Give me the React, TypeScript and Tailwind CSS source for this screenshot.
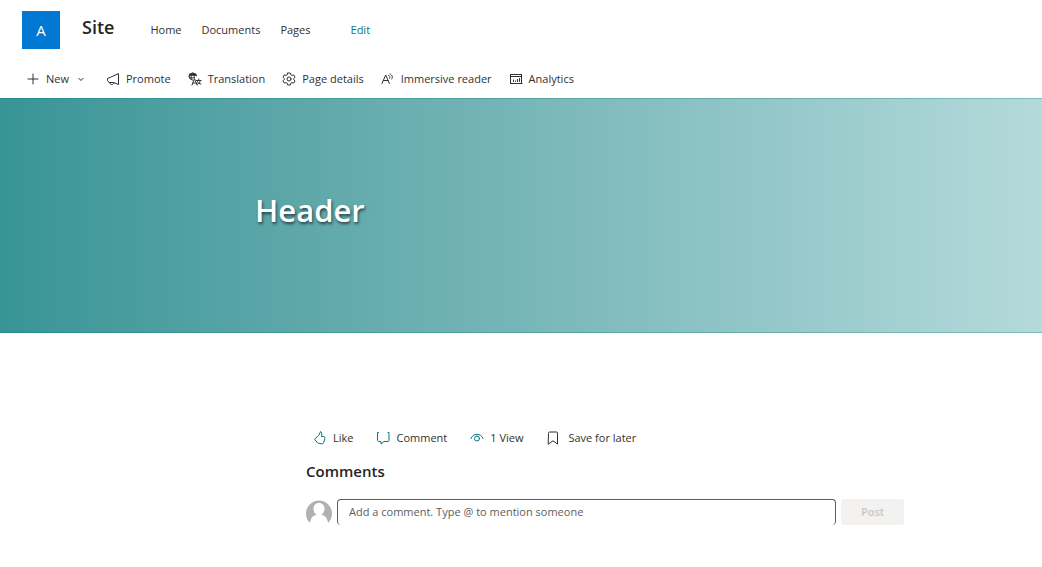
import type { ReactNode } from 'react';

const navLinks = ['Home', 'Documents', 'Pages'];

function Icon({ children, className = '' }: { children: ReactNode; className?: string }) {
  return (
    <svg
      viewBox="0 0 14 14"
      fill="none"
      stroke="currentColor"
      strokeLinecap="round"
      strokeLinejoin="round"
      aria-hidden="true"
      className={`size-3.5 shrink-0 ${className}`}
    >
      {children}
    </svg>
  );
}

const PlusIcon = () => (
  <Icon><path d="M7 2v10M2 7h10" /></Icon>
);

const MegaphoneIcon = () => (
  <Icon>
    <path d="M12.500 2v10.500L7.500 10.500H3L1.500 8.500v-2L4 5.500zM3.500 10.500c.5 2.800 4 2.800 4.500.2" />
  </Icon>
);

const TranslationIcon = () => (
  <Icon>
    <path d="M1 4.500a3.800 3.800 0 0 1 7.500-.5M1 4.500a3.800 3.800 0 0 0 3 3.500M1.200 3.200h7M1.500 5.800h4M4.500 1C2.500 3 3 6 4.300 8M4.800 1c1.500 1.300 1.800 3 1.500 5M4 13l2.500-6.500L9 13M4.800 11h3.400M8.500 8.500h4.500M10.700 7v1.500M12.300 8.500c-.3 2-1.500 3-3 3.800M9.500 9.500c.5 1.500 2 2.500 3.500 2.500" />
    <path d="M2 2.500h5.500" strokeWidth="2" />
  </Icon>
);

const GearIcon = () => (
  <Icon>
    <path d="M5.700 1h2.600l.4 1.700 1.300.7 1.700-.5L13 5.200l-1.200 1.200v1.300L13 8.800l-1.300 2.300-1.700-.5-1.300.7-.4 1.700H5.700l-.4-1.700-1.300-.7-1.700.5L1 8.800l1.200-1.200V6.400L1 5.200l1.300-2.300 1.700.5 1.300-.7z" />
    <circle cx="7" cy="7" r="2" />
  </Icon>
);

const ReaderIcon = () => (
  <Icon>
    <path d="M1 11.500 4.700 3l3.700 8.500M2.300 8.500h4.800M7.500 3.500c1.200.3 1.700 1.500 1.200 2.700M9 2c2.200.8 3 3 1.800 5" />
  </Icon>
);

const AnalyticsIcon = () => (
  <Icon>
    <path d="M1.500 2.500v9M1.500 2.500h11M1.500 4.500h11M1.500 11.500h11.500M12.500 2.500v9M4.500 8v1.500M6.500 9v.5M8.500 7.500v2M10.500 6.500v3" />
  </Icon>
);

const LikeIcon = () => (
  <Icon className="text-[#03787c]">
    <path d="M8 1c1 1 1 2.500.5 4.500h2.200c1 0 1.500.8 1.200 1.800l-1.200 4.200c-.3 1.100-1 1.500-2 1.300l-3.200-.6c-.8-.2-1.200-.5-1.700-1.200L2 8.800C1.500 8 2 7.200 2.900 6.900 5.200 5.800 6.500 3.500 7 1.500c.2-.6.6-.8 1-.5z" />
  </Icon>
);

const CommentIcon = () => (
  <Icon className="text-[#03787c]">
    <path d="M2.500 1.500h-1v7.500c0 1 .5 1.500 1.500 1.500h2v2.500l3-2.500h4c.7 0 1-.5 1-1v-8h-1" />
  </Icon>
);

const ViewIcon = () => (
  <Icon className="text-[#03787c]">
    <path d="M1 7.500C2.500 1.800 11.500 1.800 13 7.500" />
    <circle cx="7" cy="7.500" r="2.500" />
  </Icon>
);

const BookmarkIcon = () => (
  <Icon><path d="M2.500 2q0-1 1-1h7q1 0 1 1v11L7 9.800 2.500 13z" /></Icon>
);

const commands = [
  { label: 'Promote', icon: <MegaphoneIcon /> },
  { label: 'Translation', icon: <TranslationIcon /> },
  { label: 'Page details', icon: <GearIcon /> },
  { label: 'Immersive reader', icon: <ReaderIcon /> },
  { label: 'Analytics', icon: <AnalyticsIcon /> },
];

export default function App() {
  return (
    <div className="min-h-screen bg-white font-['Open_Sans','Noto_Sans',sans-serif] text-[11px] leading-4 text-[#323130]">
      <header className="flex h-15 items-center pl-[22px]">
        <a href="#" aria-label="Site home" className="flex size-[38px] items-center justify-center bg-[#0078d4] text-[15px] text-white">
          A
        </a>
        <a href="#" className="ml-[22px] pb-1.5 text-lg leading-6 font-semibold text-[#252423]">Site</a>
        <nav className="ml-9 flex items-center gap-5">
          {navLinks.map((label) => (
            <a key={label} href="#">{label}</a>
          ))}
          <a href="#" className="ml-5 text-[#03787c]">Edit</a>
        </nav>
      </header>

      <div role="toolbar" aria-label="Page commands" className="flex h-[38px] items-center gap-[17px] pl-[26px]">
        <button type="button" className="flex items-center gap-1.5 pr-1">
          <PlusIcon />
          New
          <svg viewBox="0 0 8 8" fill="none" stroke="currentColor" aria-hidden="true" className="ml-0.5 size-2">
            <path d="m1.500 3 2.500 2.500L6.500 3" />
          </svg>
        </button>
        {commands.map(({ label, icon }) => (
          <button key={label} type="button" className="flex items-center gap-1.5">
            {icon}
            {label}
          </button>
        ))}
      </div>

      <section className="flex h-[235px] items-center border-y border-[#03787c]/30 bg-linear-to-r from-[#379496] via-[#77b6b8] to-[#b4dadb] px-[255px]">
        <h1 className="pb-3 text-[31px] leading-10 font-semibold text-white [text-shadow:1px_2px_3px_rgba(0,0,0,0.6)]">Header</h1>
      </section>

      <main className="pt-[97px] pr-[138px] pl-[306px]">
        <div className="flex h-4 items-center gap-[23px] pl-[7px]">
          <button type="button" className="flex items-center gap-1.5"><LikeIcon />Like</button>
          <button type="button" className="flex items-center gap-1.5"><CommentIcon />Comment</button>
          <span className="flex items-center gap-1.5"><ViewIcon />1 View</span>
          <button type="button" className="flex items-center gap-2"><BookmarkIcon />Save for later</button>
        </div>
        <h2 className="mt-[15px] text-[15px] leading-5 font-semibold text-[#252423]">Comments</h2>
        <form className="mt-[18px] flex items-center gap-[5px]">
          <svg viewBox="0 0 26 26" aria-hidden="true" className="size-[26px] shrink-0">
            <path d="M4 24A13 13 0 1 1 22 24L20 18 16 16H10L6 18z" fill="#b3b0ad" />
            <path d="M13 4c3.500 0 5.500 2.500 5.500 6S16 16.500 13 16.500 7.500 13.500 7.500 10 9.500 4 13 4zM4 24c1-5.500 4-8.500 9-8.500s8 3 9 8.500z" fill="#fff" />
          </svg>
          <input
            type="text"
            aria-label="Add a comment"
            placeholder="Add a comment. Type @ to mention someone"
            className="h-[26px] min-w-0 flex-1 rounded-sm border border-b-0 border-[#605e5c] px-[11px] pb-0.5 placeholder:text-[#605e5c]"
          />
          <button type="submit" disabled className="h-[26px] w-[63px] rounded-xs bg-[#f3f2f1] font-semibold text-[#c8c6c4]">Post</button>
        </form>
      </main>
    </div>
  );
}
